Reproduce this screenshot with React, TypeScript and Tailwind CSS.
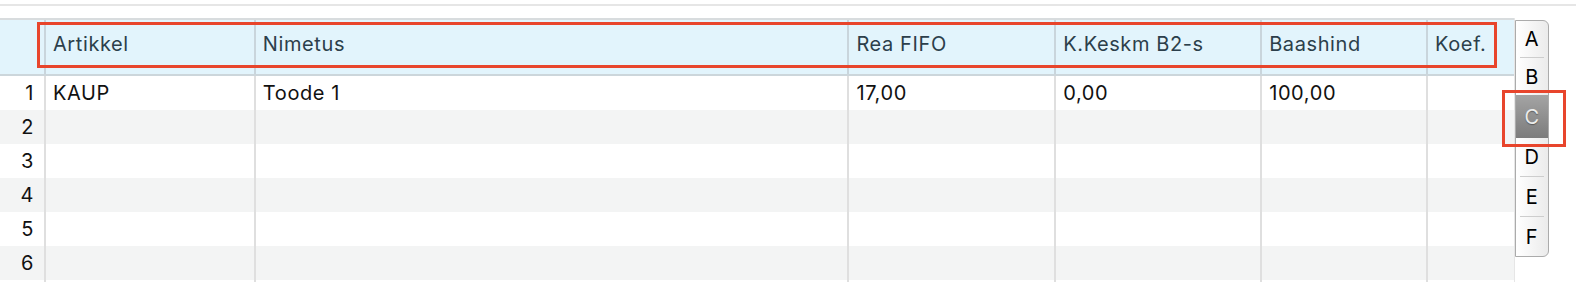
import React from 'react';

const columns = [
  { key: 'artikkel', label: 'Artikkel', width: 'w-[210px]' },
  { key: 'nimetus', label: 'Nimetus', width: 'w-[594px]' },
  { key: 'fifo', label: 'Rea FIFO', width: 'w-[207px]' },
  { key: 'keskm', label: 'K.Keskm B2-s', width: 'w-[206px]' },
  { key: 'baashind', label: 'Baashind', width: 'w-[166px]' },
  { key: 'koef', label: 'Koef.', width: 'w-[86px]' },
];

const rows: Record<string, string>[] = [
  { artikkel: 'KAUP', nimetus: 'Toode 1', fifo: '17,00', keskm: '0,00', baashind: '100,00', koef: '' },
  {},
  {},
  {},
  {},
  {},
];

function SideTabs() {
  return (
    <div className="mt-[2px] flex h-[237px] w-[34px] flex-col rounded-r-[6px] border border-[#ababab] bg-gradient-to-r from-white to-[#ebebeb] text-[20px] leading-none text-black">
      <div className="flex h-[36px] items-center justify-center">A</div>
      <div className="mx-[4px] h-px bg-[#cdcdcd]" />
      <div className="flex h-[37px] items-center justify-center">B</div>
      <div className="flex h-[43px] items-center justify-center bg-gradient-to-b from-[#a4a4a4] to-[#7c7c7c] text-[#ececec] [text-shadow:0_1px_1px_rgba(0,0,0,0.35)]">
        C
      </div>
      <div className="flex h-[38px] items-center justify-center">D</div>
      <div className="mx-[4px] h-px bg-[#cdcdcd]" />
      <div className="flex h-[39px] items-center justify-center">E</div>
      <div className="mx-[4px] h-px bg-[#cdcdcd]" />
      <div className="flex flex-1 items-center justify-center">F</div>
    </div>
  );
}

export default function App() {
  return (
    <div className="relative h-[282px] w-[1576px] overflow-hidden bg-white font-['Inter',sans-serif] tracking-[0.6px]">
      {/* top strip */}
      <div className="h-[18px] pt-[4px]">
        <div className="h-[2px] bg-[#e6e6e6]" />
      </div>

      <div className="flex">
        {/* grid */}
        <div className="h-[264px] w-[1515px] border-r border-[#e6e6e6]">
          {/* header */}
          <div className="flex h-[58px] border-y-2 border-t-[#d8dcde] border-b-[#ccd6db] bg-[#e2f4fc] text-[20px] leading-[24px] text-[#2c3f4b]">
            <div className="w-[46px] border-r-2 border-[#c9d5dc]" />
            {columns.map((c, i) => (
              <div
                key={c.key}
                className={`${c.width} pl-[7px] pt-[12px] ${i < columns.length - 1 ? 'border-r-2 border-[#c9d5dc]' : ''}`}
              >
                {c.label}
              </div>
            ))}
          </div>

          {/* body */}
          {rows.map((r, idx) => (
            <div
              key={idx}
              className={`flex h-[34px] text-[20px] leading-[24px] text-[#111] ${idx % 2 === 1 ? 'bg-[#f3f4f4]' : 'bg-white'}`}
            >
              <div className="flex w-[46px] items-center justify-end border-r-2 border-[#dfdfdf] pr-[10px]">
                {idx + 1}
              </div>
              {columns.map((c, i) => (
                <div
                  key={c.key}
                  className={`${c.width} flex items-center pl-[7px] ${i < columns.length - 1 ? 'border-r-2 border-[#dfdfdf]' : ''}`}
                >
                  {r[c.key] ?? ''}
                </div>
              ))}
            </div>
          ))}
          <div className="flex h-[2px]">
            <div className="w-[46px] border-r-2 border-[#dfdfdf]" />
            {columns.map((c, i) => (
              <div key={c.key} className={`${c.width} ${i < columns.length - 1 ? 'border-r-2 border-[#dfdfdf]' : ''}`} />
            ))}
          </div>
        </div>

        <SideTabs />
      </div>

      {/* annotation boxes */}
      <div className="pointer-events-none absolute left-[37px] top-[22px] h-[46px] w-[1460px] border-[3px] border-[#e8452c]" />
      <div className="pointer-events-none absolute left-[1502px] top-[90px] h-[57px] w-[64px] border-[3px] border-[#e8452c]" />
    </div>
  );
}
